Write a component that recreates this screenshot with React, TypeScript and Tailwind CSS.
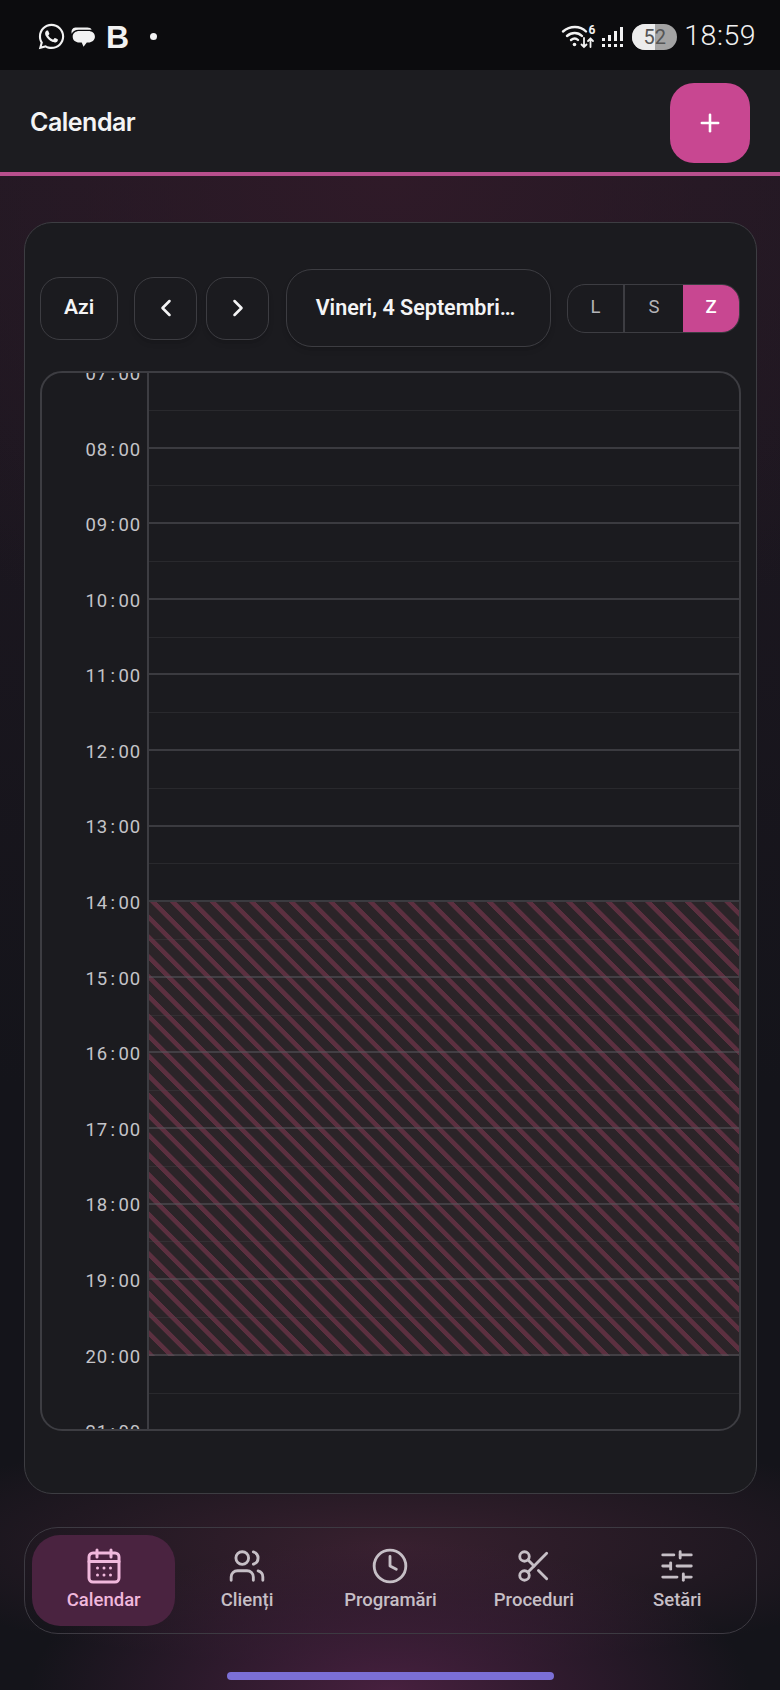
import { ChevronLeft, ChevronRight, Clock, Plus, Scissors, SlidersHorizontal, Users } from "lucide-react"
import { FaWhatsapp } from "react-icons/fa"

const hours = ["07", "08", "09", "10", "11", "12", "13", "14", "15", "16", "17", "18", "19", "20", "21"]

const CalendarIcon = () => (
	<svg width="38" height="38" viewBox="0 0 38 38" fill="none" stroke="currentColor" strokeWidth="3" strokeLinecap="round" strokeLinejoin="round">
		<rect x="4" y="6" width="30" height="29" rx="4" />
		<path d="M4 14.5h30M12 3v7M26 3v7" />
		<g fill="currentColor" stroke="none">
			<circle cx="12.5" cy="21" r="1.5" />
			<circle cx="19" cy="21" r="1.5" />
			<circle cx="25.5" cy="21" r="1.5" />
			<circle cx="12.5" cy="28" r="1.5" />
			<circle cx="19" cy="28" r="1.5" />
			<circle cx="25.5" cy="28" r="1.5" />
		</g>
	</svg>
)

const StatusBar = () => (
	<div className="flex h-[70px] items-center justify-between bg-[#0c0c0e] pl-[37px] pr-[24px] pt-[3px] text-[#f2f2f2]">
		<div className="flex items-center">
			<FaWhatsapp size={29} />
			<svg className="ml-[4px]" width="26" height="26" viewBox="0 0 24 24" fill="currentColor">
				<path d="M5 3.200h11c2 0 3.400.7 4 2H8C4.500 5.200 2.400 6.900 1.600 9 .9 6 2.200 3.200 5 3.200z" />
				<path d="M8.500 6.500h8.500c3.200 0 6 2 6 5.200s-2.800 5.300-6 5.300h-1.500l-3 4-1.700-4H8.500c-3.200 0-6-2-6-5.300s2.800-5.200 6-5.200z" />
			</svg>
			<span className="ml-[10px] font-['Liberation_Sans',sans-serif] text-[32px] leading-none font-bold">B</span>
			<span className="ml-[21px] size-[7px] rounded-full bg-[#f2f2f2]" />
		</div>
		<div className="flex items-center">
			<svg width="34" height="26" viewBox="0 0 34 26" fill="none" stroke="currentColor" strokeLinecap="round">
				<path d="M2 7.500c7-6 17-6 23 0" strokeWidth="2.400" />
				<path d="M6 12c4.500-4 11-4 15 0" strokeWidth="2.400" />
				<path d="M10 16c2.500-2 5-2 7 0" strokeWidth="2.400" />
				<circle cx="13.500" cy="20.500" r="1.800" fill="currentColor" stroke="none" />
				<path d="M23 14v9M20.500 20.500l2.500 2.500 2.500-2.500M29.500 23v-8.500M27 17l2.500-2.500 2.500 2.500" strokeWidth="1.800" />
			</svg>
			<span className="-ml-[7px] -mt-[14px] font-['Roboto',sans-serif] text-[12px] leading-none font-bold">6</span>
			<svg className="ml-[7px]" width="22" height="24" viewBox="0 0 22 24" fill="currentColor">
				<rect x="0" y="13" width="3" height="3" />
				<rect x="0" y="19" width="3" height="3" />
				<rect x="6" y="10" width="3" height="6" />
				<rect x="6" y="19" width="3" height="3" />
				<rect x="12" y="6" width="3" height="10" />
				<rect x="12" y="19" width="3" height="3" />
				<rect x="18" y="2" width="3" height="14" />
				<rect x="18" y="19" width="3" height="3" />
			</svg>
			<div className="relative ml-[8px] flex h-[26px] w-[45px] items-center justify-center overflow-hidden rounded-full bg-[#a3a3a3] font-['Roboto',sans-serif] text-[20px] leading-none text-[#555555]">
				<span className="absolute inset-y-0 left-0 w-[23px] bg-[#ececec]" />
				<span className="relative">52</span>
			</div>
			<span className="ml-[7px] font-['Roboto',sans-serif] text-[28.5px] leading-none font-light tracking-[0.5px]">18:59</span>
		</div>
	</div>
)

const Header = () => (
	<div className="flex h-[106px] items-center justify-between border-b-4 border-[#b84f8d] bg-[#1c1c20] pl-[30px] pr-[30px]">
		<h1 className="mt-[4px] font-['Inter',sans-serif] text-[25px] font-semibold tracking-[-0.5px] text-[#f4f4f5]">Calendar</h1>
		<button className="mt-[4px] flex size-[80px] items-center justify-center rounded-[24px] bg-[#c84791] text-white">
			<Plus size={28} strokeWidth={2.2} />
		</button>
	</div>
)

const Toolbar = () => (
	<div className="flex items-center font-['Roboto',sans-serif] text-[#f4f4f5]">
		<button className="flex h-[63px] w-[78px] items-center justify-center rounded-[20px] border-[1.5px] border-[#3d3d42] text-[21px] font-semibold">Azi</button>
		<button className="ml-[16px] flex h-[63px] w-[63px] items-center justify-center rounded-[20px] border-[1.5px] border-[#3d3d42] shadow-md">
			<ChevronLeft size={28} strokeWidth={2.2} />
		</button>
		<button className="ml-[9px] flex h-[63px] w-[63px] items-center justify-center rounded-[20px] border-[1.5px] border-[#3d3d42] shadow-md">
			<ChevronRight size={28} strokeWidth={2.2} />
		</button>
		<button className="ml-[17px] flex h-[78px] w-[265px] items-center justify-center rounded-[26px] border-[1.5px] border-[#3d3d42] pr-[6px] text-[21.5px] font-semibold shadow-md">
			Vineri, 4 Septembri…
		</button>
		<div className="ml-[16px] flex h-[49px] w-[173px] overflow-hidden rounded-[18px] border-[1.5px] border-[#3d3d42] text-[18.5px] text-[#b4b4b8]">
			<span className="flex w-[57px] items-center justify-center border-r-2 border-[#3d3d42]">L</span>
			<span className="flex w-[58px] items-center justify-center">S</span>
			<span className="flex flex-1 items-center justify-center bg-[#c84791] font-medium text-white">Z</span>
		</div>
	</div>
)

const Grid = () => (
	<div className="mt-[24px] flex h-[1060px] overflow-hidden rounded-[22px] border-2 border-[#3d3d42] bg-[#1b1b1f]">
		<div className="-mt-[36px] w-[105px] shrink-0 font-['Roboto',sans-serif] text-[18.5px] tracking-[0.9px] text-[#c4c4c8]">
			{hours.map((hour) => (
				<div key={hour} className="flex h-[75.6px] items-center justify-end pr-[6px]">
					{hour}
					<span className="mx-[2.5px]">:</span>
					00
				</div>
			))}
		</div>
		<div className="relative flex-1 border-l-2 border-[#3d3d42]">
			<div className="absolute inset-x-0 top-[529px] h-[453.6px] bg-[repeating-linear-gradient(45deg,#5c3040_0px,#5c3040_4px,#2b2428_4.6px,#2b2428_13.4px,#5c3040_14px)]" />
			{hours.map((hour) => (
				<div key={hour} className="relative h-[75.6px]">
					<div className="h-[37.8px] border-b border-[#48484c50]" />
					<div className="h-[37.8px] border-b-2 border-[#55555a90]" />
				</div>
			))}
		</div>
	</div>
)

const navItems = [
	{ label: "Clienți", icon: <Users size={38} strokeWidth={1.8} /> },
	{ label: "Programări", icon: <Clock size={38} strokeWidth={1.8} /> },
	{ label: "Proceduri", icon: <Scissors size={38} strokeWidth={1.8} /> },
	{ label: "Setări", icon: <SlidersHorizontal size={38} strokeWidth={1.8} /> },
]

const BottomNav = () => (
	<nav className="mt-[33px] grid h-[107px] grid-cols-5 rounded-[34px] border border-[#3d3a42] px-[7px] py-[7px] font-['Roboto',sans-serif] text-[18.5px] font-medium">
		<div className="flex flex-col items-center justify-center gap-[2px] rounded-[28px] bg-[#4a2340] text-[#f0b8dc]">
			<CalendarIcon />
			<span>Calendar</span>
		</div>
		{navItems.map((item) => (
			<div key={item.label} className="flex flex-col items-center justify-center gap-[2px] text-[#c6bfc6]">
				{item.icon}
				<span>{item.label}</span>
			</div>
		))}
	</nav>
)

export default function App() {
	return (
		<div className="flex h-[1690px] w-[780px] flex-col overflow-hidden bg-[#16161a]">
			<StatusBar />
			<Header />
			<main className="flex flex-1 flex-col bg-[radial-gradient(ellipse_360px_150px_at_390px_100%,#47203f_0%,transparent_100%),radial-gradient(ellipse_520px_120px_at_390px_1370px,#38202f_0%,transparent_100%),radial-gradient(ellipse_620px_520px_at_390px_0%,#2f1a28_0%,transparent_100%),linear-gradient(to_bottom,#1f1822_0%,#14141a_60%,#14141a_100%)] pl-[24px] pr-[23px] pt-[46px]">
				<section className="flex h-[1272px] flex-col rounded-[28px] border border-[#3d3d42] bg-[#1b1b1f] px-[15px] pt-[46px]">
					<Toolbar />
					<Grid />
				</section>
				<BottomNav />
				<div className="mx-auto mt-[38px] h-[8px] w-[327px] rounded-full bg-[#7b6fd6]" />
			</main>
		</div>
	)
}
